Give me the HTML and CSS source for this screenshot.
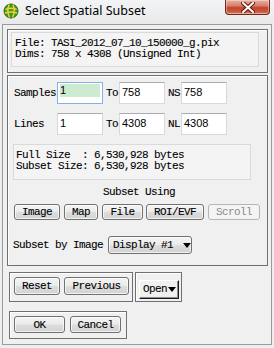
FILE: index.html
```html
<!DOCTYPE html>
<html>
<head>
<meta charset="utf-8">
<link rel="stylesheet" href="styles.css">
</head>
<body>
<div class="window">
  <div class="titlebar">
    <svg class="appicon" width="16" height="16" viewBox="0 0 16 16">
      <circle cx="8" cy="8" r="7" fill="#3f9a2c" stroke="#2a6a1c" stroke-width="1"/>
      <path d="M2.5 6.5 Q8 4 13.5 6.5 M2 10 Q8 8 14 10 M6 1.5 Q3.5 8 6.5 14.5 M10 1.5 Q12.5 8 9.5 14.5" fill="none" stroke="#f2d22e" stroke-width="1.4"/>
    </svg>
    <span class="title">Select Spatial Subset</span>
    <div class="close">
      <svg width="14" height="11" viewBox="0 0 14 11">
        <path d="M2 1 L12 10 M12 1 L2 10" stroke="#5a1a10" stroke-width="4" stroke-linecap="square"/>
        <path d="M2 1 L12 10 M12 1 L2 10" stroke="#ffffff" stroke-width="2" stroke-linecap="square"/>
      </svg>
    </div>
  </div>
  <div class="client">
    <div class="group g-info">
      <div class="infobox mono">File: TASI_2012_07_10_150000_g.pix<br>Dims: 758 x 4308 (Unsigned Int)</div>
    </div>
    <div class="group g-main">
      <div class="fieldrow">
        <span class="mono lbl lbl-first">Samples</span>
        <span class="input focused"><span class="sel">1</span></span>
        <span class="mono lbl">To</span>
        <span class="input">758</span>
        <span class="mono lbl">NS</span>
        <span class="input">758</span>
      </div>
      <div class="fieldrow">
        <span class="mono lbl lbl-first">Lines</span>
        <span class="input">1</span>
        <span class="mono lbl">To</span>
        <span class="input">4308</span>
        <span class="mono lbl">NL</span>
        <span class="input">4308</span>
      </div>
      <div class="sizebox mono">Full Size&nbsp;&nbsp;: 6,530,928 bytes<br>Subset Size: 6,530,928 bytes</div>
      <div class="caption mono">Subset Using</div>
      <div class="btnrow">
        <span class="btn mono b-image">Image</span>
        <span class="btn mono b-map">Map</span>
        <span class="btn mono b-file">File</span>
        <span class="btn mono b-roi">ROI/EVF</span>
        <span class="btn mono b-scroll disabled">Scroll</span>
      </div>
      <div class="byimage">
        <span class="mono">Subset by Image</span>
        <span class="btn mono dropdown">Display #1<span class="tri"></span></span>
      </div>
    </div>
    <div class="row3">
      <div class="group g-reset">
        <span class="btn mono b-reset">Reset</span>
        <span class="btn mono b-prev">Previous</span>
      </div>
      <div class="group g-open">
        <span class="openbtn mono">Open<span class="tri"></span></span>
      </div>
    </div>
    <div class="group g-ok">
      <span class="btn mono b-ok">OK</span>
      <span class="btn mono b-cancel">Cancel</span>
    </div>
  </div>
</div>
</body>
</html>
```
FILE: styles.css
```css
* { box-sizing: border-box; }
html, body { margin: 0; padding: 0; }
body {
  width: 274px;
  height: 348px;
  background: #eceef0;
  overflow: hidden;
}
.window {
  width: 274px;
  height: 348px;
  position: relative;
}
.titlebar {
  height: 24px;
  display: flex;
  align-items: flex-start;
  background: linear-gradient(#f3f4f5, #e7e9eb);
}
.appicon { margin: 3px 0 0 3px; }
.title {
  font-family: "Noto Sans", "Open Sans", sans-serif;
  font-size: 12.5px;
  color: #000;
  margin-left: 6px;
  margin-top: 3px;
  line-height: 15px;
}
.close {
  position: absolute;
  left: 225px;
  top: 0;
  width: 45px;
  height: 15px;
  border: 1px solid #6e2a1e;
  border-top: none;
  border-radius: 0 0 4px 4px;
  background: linear-gradient(#eab0a3 0%, #d8806c 40%, #c24530 55%, #cc5a40 85%, #e08a70 100%);
  display: flex;
  align-items: center;
  justify-content: center;
  box-shadow: inset 0 0 0 1px rgba(255,255,255,0.35);
}
.client {
  margin-left: 2px;
  width: 270px;
  height: 321px;
  border: 1px solid #9a9a9a;
  background: #f0f0f0;
  padding: 4px 0 0 4px;
}
.mono {
  font-family: "Liberation Mono", "Courier New", monospace;
  font-size: 11px;
  letter-spacing: -0.6px;
  color: #000;
  line-height: 11px;
  -webkit-text-stroke: 0.1px #000;
}
.group {
  border: 1px solid #707070;
  box-shadow: inset 1px 1px 0 #ffffff;
}
.g-info {
  width: 261px;
  height: 44px;
  padding: 2px 0 0 3px;
}
.infobox {
  width: 248px;
  height: 35px;
  background: #f4f4f4;
  border: 1px solid #dadada;
  padding: 5px 0 0 3px;
}
.g-main {
  margin-top: 2px;
  width: 261px;
  height: 191px;
  padding: 6px 0 0 5px;
}
.fieldrow {
  display: flex;
  align-items: center;
  height: 22px;
  margin-bottom: 9px;
}
.lbl { padding-left: 1px; }
.lbl-first { width: 44px; }
.fieldrow .lbl:not(.lbl-first) { width: 14px; margin-left: 2px; }
.input {
  width: 46px;
  height: 22px;
  background: #ffffff;
  border: 1px solid #d6d9df;
  border-top-color: #abadb3;
  font-family: "Liberation Sans", Arial, sans-serif;
  font-size: 11px;
  line-height: 13px;
  padding: 3px 0 0 2px;
  color: #000;
}
.input.focused {
  border-color: #7eb4ea;
  padding: 1px 1px 0 2px;
}
.sel {
  display: block;
  width: 40px;
  height: 13px;
  background: #ccebd0;
  line-height: 13px;
  padding-left: 0;
}
.sizebox {
  width: 238px;
  height: 36px;
  background: #f4f4f4;
  border: 1px solid #dadada;
  padding: 5px 0 0 2px;
}
.caption {
  text-align: center;
  width: 248px;
  margin-top: 7px;
  height: 11px;
  padding-left: 4px;
}
.btnrow {
  display: flex;
  margin-top: 6px;
  height: 16px;
}
.btn {
  display: inline-flex;
  align-items: center;
  justify-content: center;
  height: 16px;
  border: 1px solid #707070;
  border-radius: 3px;
  background: linear-gradient(#f4f4f4 0%, #ebebeb 48%, #dddddd 52%, #d2d2d2 100%);
  box-shadow: inset 0 0 0 1px rgba(255,255,255,0.7);
  padding-top: 1px;
}
.b-image { width: 46px; margin-left: 1px; }
.b-map { width: 34px; margin-left: 4px; }
.b-file { width: 41px; margin-left: 4px; }
.b-roi { width: 58px; margin-left: 3px; }
.b-scroll { width: 52px; margin-left: 4px; }
.btn.disabled {
  border-color: #b5b5b5;
  background: #f4f4f4;
  color: #8a8a8a;
  -webkit-text-stroke: 0;
  box-shadow: none;
}
.byimage {
  display: flex;
  align-items: center;
  margin-top: 16px;
  height: 18px;
}
.dropdown {
  margin-left: 5px;
  width: 84px;
  height: 18px;
  justify-content: flex-start;
  padding-left: 4px;
}
.dropdown .tri { margin-left: 10px; }
.tri {
  display: inline-block;
  width: 0; height: 0;
  border-left: 4px solid transparent;
  border-right: 4px solid transparent;
  border-top: 5px solid #000;
}
.row3 {
  display: flex;
  margin-top: 6px;
  margin-left: 2px;
}
.g-reset {
  width: 124px;
  height: 30px;
  display: flex;
  align-items: flex-start;
  padding: 4px 0 0 4px;
}
.b-reset { width: 46px; height: 18px; }
.b-prev { width: 65px; height: 18px; margin-left: 4px; }
.g-open {
  margin-left: 2px;
  width: 47px;
  height: 30px;
  padding: 5px 0 0 3px;
}
.openbtn {
  display: inline-flex;
  align-items: center;
  justify-content: flex-start;
  width: 40px;
  height: 19px;
  padding-left: 3px;
  border: 1px solid;
  border-color: #ffffff #1a1a1a #1a1a1a #ffffff;
  box-shadow: inset -1px -1px 0 #8a8a8a;
  background: #f0f0f0;
}
.openbtn .tri { margin-left: 1px; }
.g-ok {
  margin-left: 2px;
  margin-top: 9px;
  width: 118px;
  height: 28px;
  display: flex;
  padding: 4px 0 0 4px;
}
.b-ok { width: 51px; height: 17px; }
.b-cancel { width: 51px; height: 17px; margin-left: 5px; }
```
